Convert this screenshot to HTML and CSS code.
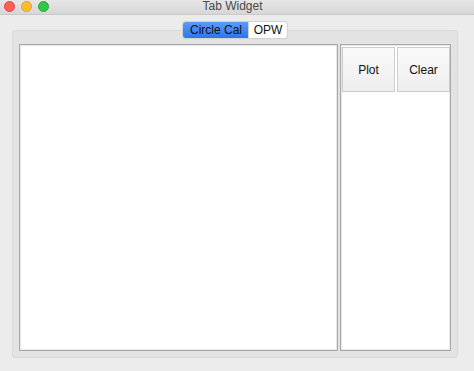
FILE: index.html
```html
<!DOCTYPE html>
<html lang="en">
<head>
    <meta charset="UTF-8">
    <title>Tab Widget</title>
    <link rel="stylesheet" href="styles.css">
</head>
<body>
    <div class="window">
        <div class="titlebar">
            <div class="lights">
                <span class="light red"></span>
                <span class="light yellow"></span>
                <span class="light green"></span>
            </div>
            <div class="title">Tab Widget</div>
        </div>
        <div class="content">
            <div class="tabs">
                <div class="tab active">Circle Cal</div>
                <div class="tab">OPW</div>
            </div>
            <div class="pane">
                <div class="frame canvas"></div>
                <div class="frame side">
                    <div class="buttons">
                        <button class="btn">Plot</button>
                        <button class="btn">Clear</button>
                    </div>
                </div>
            </div>
        </div>
    </div>
</body>
</html>
```

FILE: styles.css
```css
body{
    margin:0;
    background:#ececec;
    font-family:"Liberation Sans", Arial, sans-serif;
}
.window{
    width:474px;height:371px;
    background:#ececec;
    overflow:hidden;
}
.titlebar{
    height:14px;
    border-bottom:1px solid #c9c9c9;
    background:linear-gradient(#e6e6e6,#d6d6d6);
    display:flex;
    align-items:center;
}
.lights{
    display:flex;
    gap:6px;
    padding-left:4px;
    margin-top:-2px;
}
.light{
    width:11px;height:11px;
    border-radius:50%;
    box-sizing:border-box;
}
.red{background:#fc5f57;border:1px solid #e0443e;}
.yellow{background:#fdbc2e;border:1px solid #dea123;}
.green{background:#33c748;border:1px solid #27aa35;}
.title{
    flex:1;
    text-align:center;
    font-size:12px;
    color:#4a4a4a;
    margin-left:-58px;
    margin-top:-2px;
}
.content{
    padding:7px 16px 0 12px;
}
.tabs{
    display:flex;
    justify-content:center;
    margin-bottom:-8px;
    position:relative;
    z-index:1;
}
.tab{
    height:16px;
    line-height:16px;
    font-size:12px;
    color:#111;
    background:#fff;
    text-align:center;
    white-space:nowrap;
    box-shadow:0 0 0 1px #d2d2d2, 0 1px 1px #c8c8c8;
}
.tab.active{
    width:66px;
    background:linear-gradient(#5c9cfa,#2f74ef);
    border-radius:3px 0 0 3px;
}
.tab:last-child{
    width:38px;
    border-radius:0 3px 3px 0;
}
.pane{
    height:313px;
    padding:13px 6px 0 6px;
    background:#e3e3e3;
    border:1px solid #dadada;
    border-radius:3px;
    display:flex;
    gap:2px;
}
.frame{
    height:305px;
    background:#fff;
    border:1px solid #a8a8a8;
    box-shadow:inset 0 0 0 1px #e8e8e8;
}
.canvas{
    width:317px;
}
.side{
    width:109px;
    overflow:hidden;
}
.buttons{
    display:flex;
    gap:2px;
    padding:2px 0 0 1px;
}
.btn{
    width:53px;height:45px;
    flex:none;
    font-family:"Liberation Sans", Arial, sans-serif;
    font-size:12px;
    color:#111;
    background:linear-gradient(#fafafa,#eeeeee);
    border:1px solid #cdcdcd;
    padding:0;
}
```
